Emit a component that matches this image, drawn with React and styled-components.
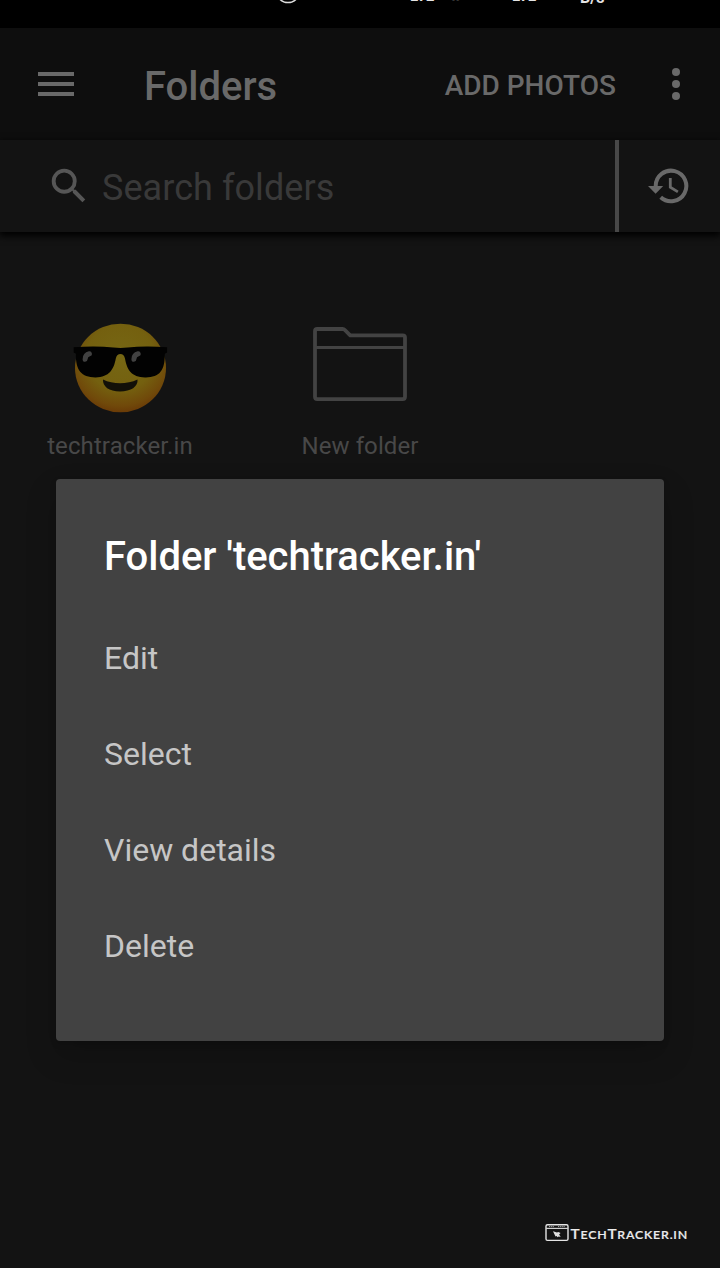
import React from 'react';
import styled, { createGlobalStyle } from 'styled-components';

const GlobalStyle = createGlobalStyle`
  * { box-sizing: border-box; }
  body { margin: 0; background: #131313; font-family: Roboto, "Noto Sans", sans-serif; }
  svg { display: block; flex: none; }
`;

const Screen = styled.div`
  position: relative;
  display: flex;
  flex-direction: column;
  width: 720px;
  height: 1268px;
  overflow: hidden;
  background: #131313;
`;

const StatusBar = styled.div`
  display: flex;
  align-items: flex-start;
  height: 28px;
  padding-left: 274px;
  overflow: hidden;
  background: #000;
`;

const StatusText = styled.span`
  flex: none;
  width: ${(p) => p.$width}px;
  margin-top: ${(p) => p.$shift}px;
  color: ${(p) => p.$color || '#e4e4e4'};
  font-size: ${(p) => p.$size}px;
  font-weight: 700;
  line-height: 16px;
  white-space: nowrap;
`;

const AppBar = styled.header`
  display: flex;
  align-items: center;
  height: 112px;
  padding: 0 38px;
  background: #0e0e0e;
  color: #696969;
`;

const Title = styled.h1`
  flex: 1;
  margin: 6px 0 0 70px;
  font-size: 40px;
  font-weight: 500;
  line-height: 48px;
`;

const AddButton = styled.button`
  margin: 4px 54px 0 0;
  padding: 0;
  border: 0;
  background: none;
  color: inherit;
  font: 500 28px/34px Roboto, sans-serif;
`;

const SearchBar = styled.div`
  display: flex;
  align-items: center;
  height: 92px;
  background: #131313;
  box-shadow: 0 3px 7px 1px #000;
`;

const SearchField = styled.div`
  display: flex;
  align-items: center;
  gap: 10px;
  width: 615px;
  padding-left: 46px;
  color: #393939;
  font-size: 36px;
  line-height: 44px;
  letter-spacing: 0.06px;
`;

const SearchLabel = styled.span`
  margin-top: 3px;
`;

const HistoryButton = styled.div`
  flex: 1;
  display: flex;
  align-items: center;
  height: 92px;
  padding-left: 28px;
  border-left: 4px solid #484848;
`;

const FolderGrid = styled.main`
  display: grid;
  grid-template-columns: repeat(3, 240px);
  padding-top: 85px;
`;

const Folder = styled.div`
  display: flex;
  flex-direction: column;
  align-items: center;
`;

const FolderName = styled.span`
  margin-top: 15px;
  color: #484848;
  font-size: 24px;
  line-height: 32px;
  letter-spacing: 0.1px;
`;

const Dialog = styled.section`
  position: absolute;
  top: 479px;
  left: 56px;
  width: 608px;
  height: 562px;
  padding: 54px 48px 0;
  border-radius: 4px;
  background: #424242;
  box-shadow: 0 14px 30px 2px rgba(0, 0, 0, 0.16), 0 3px 6px rgba(0, 0, 0, 0.15);
`;

const DialogTitle = styled.h2`
  margin: 0 0 29px;
  color: #fff;
  font-size: 40px;
  font-weight: 500;
  line-height: 48px;
  letter-spacing: -0.04px;
  white-space: nowrap;
`;

const MenuItem = styled.div`
  display: flex;
  align-items: center;
  height: 96px;
  color: #c6c6c6;
  font-size: 32px;
`;

const Watermark = styled.div`
  position: absolute;
  top: 1220px;
  left: 542px;
`;

const MenuIcon = () => (
  <svg width="36" height="24" fill="#696969">
    <path d="M0 0h36v4H0zM0 10h36v4H0zM0 20h36v4H0z" />
  </svg>
);

const MoreIcon = () => (
  <svg width="12" height="32" viewBox="-2 0 12 32" fill="#696969" overflow="visible">
    <circle cx="4" cy="4" r="4" />
    <circle cx="4" cy="16" r="4" />
    <circle cx="4" cy="28" r="4" />
  </svg>
);

const SearchIcon = () => (
  <svg width="46" height="46" viewBox="0 0 24 24" fill="#565656">
    <path d="M15.5 14h-.79l-.28-.27A6.47 6.47 0 0 0 16 9.5 6.5 6.5 0 1 0 9.5 16c1.61 0 3.09-.59 4.23-1.57l.27.28v.79l5 4.99L20.49 19l-4.99-5zm-6 0a4.5 4.5 0 1 1 0-9 4.5 4.5 0 0 1 0 9z" />
  </svg>
);

const HistoryIcon = () => (
  <svg width="42" height="38" viewBox="647 167 42 38" fill="none" stroke="#696969">
    <path d="M655.7 187v-1a15.3 15.3 0 1 1 5 11.3" strokeWidth="4" />
    <path d="M670.3 178v9.3l7.6 4.6" strokeWidth="2.8" />
    <path d="M648 186h15.2l-7.6 7.7z" fill="#696969" stroke="none" />
  </svg>
);

const SunglassesFace = () => (
  <svg width="96" height="98" viewBox="72 317 96 98">
    <defs>
      <radialGradient id="skin" cx="50%" cy="38%" r="62%">
        <stop offset="0" stopColor="#766714" />
        <stop offset="0.6" stopColor="#74600f" />
        <stop offset="0.88" stopColor="#70490a" />
        <stop offset="1" stopColor="#6a3b07" />
      </radialGradient>
    </defs>
    <ellipse cx="120.5" cy="368" rx="45.5" ry="44.3" fill="url(#skin)" />
    <path
      d="M73.7 347.2q23-1.8 39.5.4 7.3.9 14.6 0 16-2.2 39.3-.4v5.2l-2.3 1.4c.2 17-5.4 23.8-19.6 23.6-14 0-18.3-8-20.2-18.8-.7-3.4-2.4-4.6-4.6-4.6s-3.9 1.2-4.6 4.6c-2 10.6-6.3 18.8-20.3 18.8-14.2 0-20-7-19.6-23.6l-2.2-1.4z"
      fill="#020202"
    />
    <path d="M103 379.5c10 5 24 5 34.5 0 .8 7-6.5 12-17.5 12s-17.5-5-17-12z" fill="#121008" />
    <g fill="none" stroke="#414141" strokeWidth="5" strokeLinecap="round">
      <path d="M89.4 353.8q-4.2 1-4.3 5.4" />
      <path d="M138.2 353.8q-4.2 1-4.3 5.4" />
    </g>
  </svg>
);

const FolderOutline = () => (
  <svg width="96" height="98" viewBox="312 317 96 98" fill="none" stroke="#434343" strokeWidth="3.8" strokeLinejoin="round">
    <path d="M315 331.3q0-2.3 2.3-2.3h25.2q1.4 0 2.4 1l5.3 5.3h52.5q2.3 0 2.3 2.3v59.2q0 2.3-2.3 2.3h-85.4q-2.3 0-2.3-2.3z" />
    <path d="M315 347.5h90" strokeWidth="3.2" />
  </svg>
);

const BrandLogo = () => (
  <svg width="150" height="26" viewBox="542 1220 150 26">
    <rect x="546" y="1224.8" width="22" height="15.6" rx="1.4" fill="none" stroke="#e4e4e4" strokeWidth="1.4" />
    <path d="M546 1228.4h22" stroke="#d0d0d0" strokeWidth="1.2" />
    <path d="M549 1226.6h5M558 1226.6h7" stroke="#aaa" strokeWidth="1" strokeDasharray="1.3 .8" />
    <path d="M553 1231.2l4 1.2 1.2-.4 2.4 1-1.5 1.5 1.6 2.4-2-.5-1.2.8-.8-1.3-1.2.5z" fill="#dedede" />
    <text
      x="570.5"
      y="1239"
      fill="#ececec"
      fontFamily="Lato, sans-serif"
      fontWeight="600"
      fontSize="10.8"
      letterSpacing="0.7"
      stroke="#ececec"
      strokeWidth="0.15"
      textLength="117.5"
      lengthAdjust="spacingAndGlyphs"
    >
      <tspan fontSize="13.4">T</tspan>ECH<tspan fontSize="13.4">T</tspan>RACKER.IN
    </text>
  </svg>
);

const ACTIONS = ['Edit', 'Select', 'View details', 'Delete'];

export default function App() {
  return (
    <Screen>
      <GlobalStyle />
      <StatusBar>
        <svg width="136" height="8" fill="none" stroke="#dcdcdc" strokeWidth="1.5">
          <circle cx="14" cy="-9" r="11.6" />
        </svg>
        <StatusText $width={42} $shift={-12} $size={15}>LTE</StatusText>
        <StatusText $width={60} $shift={-12} $size={14} $color="#333">x</StatusText>
        <StatusText $width={68} $shift={-12} $size={15}>LTE</StatusText>
        <StatusText $width={40} $shift={-10} $size={16}>B/s</StatusText>
      </StatusBar>
      <AppBar>
        <MenuIcon />
        <Title>Folders</Title>
        <AddButton>ADD PHOTOS</AddButton>
        <MoreIcon />
      </AppBar>
      <SearchBar>
        <SearchField>
          <SearchIcon />
          <SearchLabel>Search folders</SearchLabel>
        </SearchField>
        <HistoryButton>
          <HistoryIcon />
        </HistoryButton>
      </SearchBar>
      <FolderGrid>
        <Folder>
          <SunglassesFace />
          <FolderName>techtracker.in</FolderName>
        </Folder>
        <Folder>
          <FolderOutline />
          <FolderName>New folder</FolderName>
        </Folder>
      </FolderGrid>
      <Dialog>
        <DialogTitle>Folder 'techtracker.in'</DialogTitle>
        {ACTIONS.map((action) => (
          <MenuItem key={action}>{action}</MenuItem>
        ))}
      </Dialog>
      <Watermark>
        <BrandLogo />
      </Watermark>
    </Screen>
  );
}
